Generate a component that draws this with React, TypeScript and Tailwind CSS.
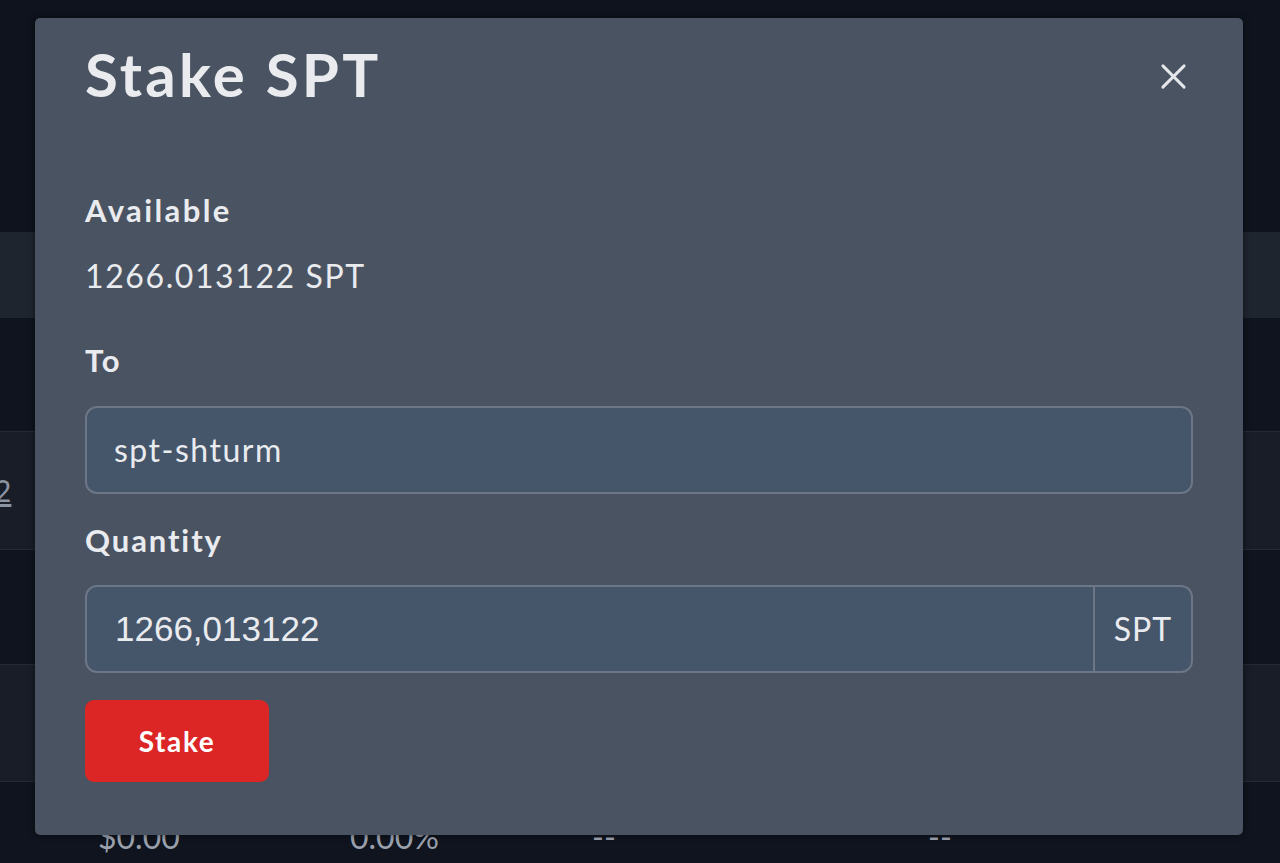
import React from "react";

const font = { fontFamily: "Lato, 'Noto Sans', sans-serif" };

export default function App() {
  return (
    <div className="relative h-[863px] w-[1280px] overflow-hidden bg-[#0e131d]" style={font}>
      {/* background page (table) */}
      <div className="flex flex-col">
        <div className="h-[232px] bg-[#0e131d]" />
        <div className="h-[86px] bg-[#1f252f]" />
        <div className="h-[114px] border-b border-[#252b35] bg-[#0f141e]" />
        <div className="flex h-[118px] items-center border-b border-[#252b35] bg-[#181d27]">
          <span className="ml-[-6px] text-[30px] text-[#8b92a0] underline">2</span>
        </div>
        <div className="h-[115px] border-b border-[#252b35] bg-[#0f141e]" />
        <div className="h-[117px] border-b border-[#252b35] bg-[#181d27]" />
        <div className="flex h-[81px] items-end bg-[#0f141e] pb-[2px] text-[32px] text-[#9aa1ad]">
          <span className="ml-[98px] w-[252px]">$0.00</span>
          <span className="w-[242px]">0.00%</span>
          <span className="w-[336px]">--</span>
          <span>--</span>
        </div>
      </div>

      {/* modal */}
      <div className="absolute left-[35px] top-[18px] h-[817px] w-[1208px] rounded-[5px] bg-[#4a5361] px-[50px] shadow-[0_0_6px_rgba(0,0,0,0.5)]">
        <div className="flex items-start justify-between pt-[20px]">
          <h1 className="text-[60px] font-bold leading-[1.2] tracking-[3.2px] text-[#e9ebef]">Stake SPT</h1>
          <button className="mr-[6px] mt-[25px] text-[#e5e7eb]">
            <svg width="27" height="27" viewBox="0 0 28 28" fill="none" stroke="currentColor" strokeWidth="3" strokeLinecap="round">
              <path d="M3 3 L25 25 M25 3 L3 25" />
            </svg>
          </button>
        </div>

        <div className="mt-[82px] text-[31px] font-bold leading-[1.2] tracking-[2.4px] text-[#e9ebef]">Available</div>
        <div className="mt-[28px] text-[32px] leading-[1.2] tracking-[1.6px] text-[#e9ebef]">1266.013122 SPT</div>

        <div className="mt-[46px] text-[31px] font-bold leading-[1.2] tracking-[2px] text-[#e9ebef]">To</div>
        <div className="mt-[27px] flex h-[88px] items-center rounded-[12px] border-2 border-[#6c7686] bg-[#45556a] px-[27px] text-[32px] tracking-[1.5px] text-[#e9ebef]">
          spt-shturm
        </div>

        <div className="mt-[28px] text-[31px] font-bold leading-[1.2] tracking-[1.9px] text-[#e9ebef]">Quantity</div>
        <div className="mt-[26px] flex h-[88px] rounded-[12px] border-2 border-[#6c7686] bg-[#45556a]">
          <div className="flex flex-1 items-center px-[28px] text-[35px] text-[#e9ebef]" style={{ fontFamily: "'Liberation Sans', Arial, sans-serif" }}>
            1266,013122
          </div>
          <div className="flex w-[98px] items-center justify-center border-l-2 border-[#6c7686] text-[32px] tracking-[1px] text-[#e9ebef]">
            SPT
          </div>
        </div>

        <button className="mt-[27px] flex h-[82px] w-[184px] items-center justify-center rounded-[9px] bg-[#dc2626] text-[28px] font-bold tracking-[1.6px] text-white">
          Stake
        </button>
      </div>
    </div>
  );
}
